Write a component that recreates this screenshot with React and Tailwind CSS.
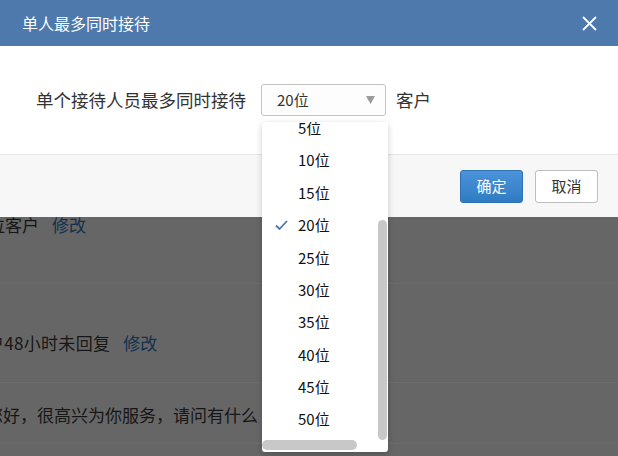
import React from "react";

const items = ["5位", "10位", "15位", "20位", "25位", "30位", "35位", "40位", "45位", "50位"];

export default function App() {
  return (
    <div
      className="relative w-[618px] h-[456px] overflow-hidden bg-[#666666]"
      style={{ fontFamily: '"Noto Sans CJK SC", "Noto Sans", sans-serif' }}
    >
      {/* dimmed page behind */}
      <div className="flex flex-col text-[17px] leading-[24px] text-[#161616]">
        <div className="h-[284px] border-b border-[#6d6d6d] pt-[213px]">
          <div className="ml-[-12px] flex whitespace-nowrap">
            <span>位客户</span>
            <span className="ml-[13px] text-[#13304e]">修改</span>
          </div>
        </div>
        <div className="h-[99px] border-b border-[#6d6d6d] pt-[47px]">
          <div className="ml-[-13px] flex whitespace-nowrap">
            <span className="tracking-[0.3px]">户48小时未回复</span>
            <span className="ml-[13px] text-[#13304e]">修改</span>
          </div>
        </div>
        <div className="h-[61px] border-b border-[#6d6d6d] pt-[20px]">
          <div className="ml-[-14px] whitespace-nowrap">您好，很高兴为你服务，请问有什么</div>
        </div>
      </div>

      {/* modal */}
      <div className="absolute left-0 right-0 top-0 flex flex-col">
        <div className="h-[46px] bg-[#4d79ad] flex items-center justify-between pl-[22px] pr-[21px]">
          <span className="text-[16px] text-white">单人最多同时接待</span>
          <svg width="15" height="15" viewBox="0 0 15 15">
            <path d="M1 1 L14 14 M14 1 L1 14" stroke="#ffffff" strokeWidth="1.8" fill="none" />
          </svg>
        </div>
        <div className="h-[108px] bg-white flex items-center pl-[36px]">
          <span className="text-[17.5px] text-[#333]">单个接待人员最多同时接待</span>
          <div className="ml-[15px] w-[125px] h-[32px] border border-[#c3c3c3] rounded-[3px] bg-[#fdfdfd] flex items-center justify-between pl-[15px] pr-[10px]">
            <span className="text-[15px] text-[#333]">20位</span>
            <svg width="9" height="8" viewBox="0 0 9 8">
              <path d="M0 0 L9 0 L4.5 8 Z" fill="#9a9a9a" />
            </svg>
          </div>
          <span className="ml-[10px] text-[17.5px] text-[#333]">客户</span>
        </div>
        <div className="h-[63px] bg-[#f7f7f7] border-t border-[#e5e5e5] flex justify-end items-start pt-[15px] pr-[20px] gap-[12px]">
          <button className="w-[63px] h-[33px] rounded-[3px] border border-[#2d72b5] bg-gradient-to-b from-[#4b93da] to-[#2f7cc3] text-white text-[15px]">
            确定
          </button>
          <button className="w-[63px] h-[33px] rounded-[3px] border border-[#bdbdbd] bg-white text-[#333] text-[15px]">
            取消
          </button>
        </div>
      </div>

      {/* dropdown */}
      <div className="absolute left-[262px] top-[122px] w-[126px] h-[330px] bg-white rounded-[3px] shadow-[0_2px_6px_rgba(0,0,0,0.2)] overflow-hidden">
        <div className="mt-[-10px] flex flex-col">
          {items.map((it) => (
            <div key={it} className="relative h-[32.4px] flex items-center pl-[36px] text-[15px] text-[#111]">
              {it === "20位" && (
                <svg className="absolute left-[13px] top-[11px]" width="13" height="10" viewBox="0 0 13 10">
                  <path d="M1 5.5 L4.5 9 L12 1" stroke="#4d79ad" strokeWidth="1.8" fill="none" />
                </svg>
              )}
              {it}
            </div>
          ))}
        </div>
        <div className="absolute left-[116px] top-[98px] w-[9px] h-[220px] rounded-full bg-[#c8c8c8]" />
        <div className="absolute left-0 top-[318px] w-[95px] h-[10px] rounded-full bg-[#c8c8c8]" />
      </div>
    </div>
  );
}
